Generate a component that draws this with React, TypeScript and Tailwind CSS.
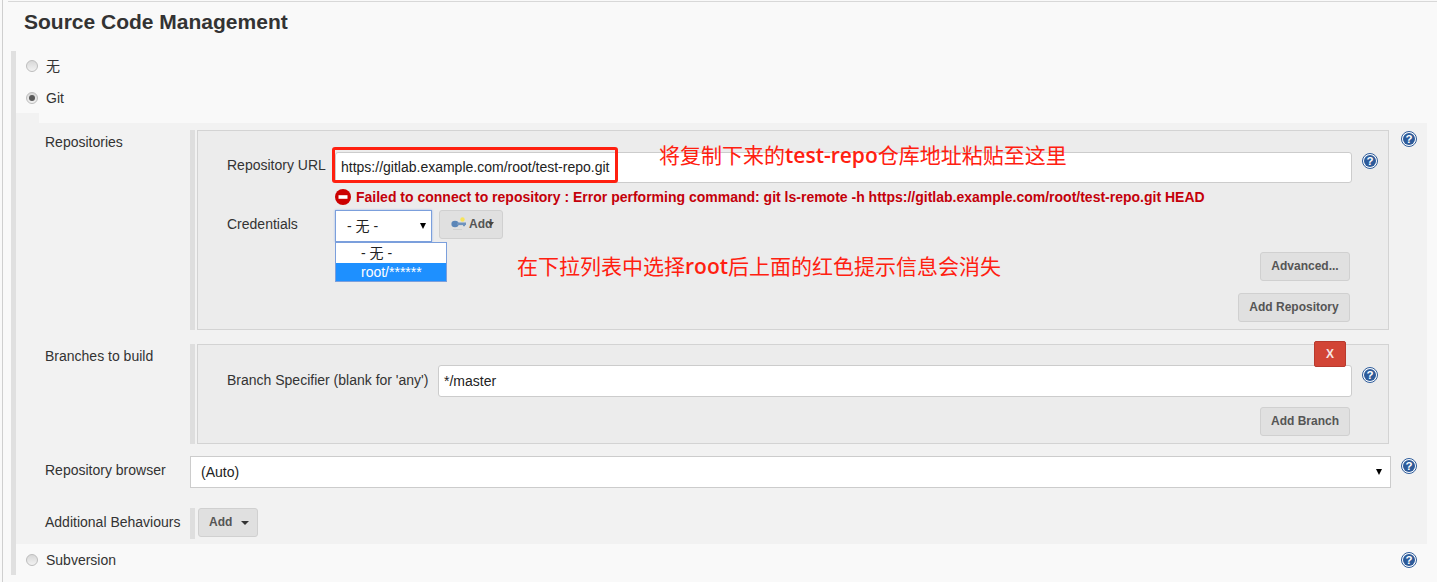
const sans = "font-['Liberation_Sans','Noto_Sans_CJK_SC',sans-serif]";

function HelpIcon() {
  return (
    <svg width="16" height="16" viewBox="0 0 16 16" className="shrink-0">
      <circle cx="8" cy="8" r="7.5" fill="#fff" stroke="#2d5b9a" strokeWidth="1" />
      <circle cx="8" cy="8" r="6" fill="#2d5b9a" />
      <text x="8" y="12" textAnchor="middle" fontSize="11.5" fontWeight="700" fill="#fff" fontFamily="Liberation Sans">
        ?
      </text>
    </svg>
  );
}

function Radio({ checked }: { checked?: boolean }) {
  return (
    <span className="-mt-px flex h-3 w-3 shrink-0 items-center justify-center rounded-full border border-[#bdbdbd] bg-gradient-to-b from-[#d8d8d8] to-[#f2f2f2]">
      {checked && <span className="h-1.5 w-1.5 rounded-full bg-[#5a5a5a]" />}
    </span>
  );
}

function GrayButton({ children, className }: { children: React.ReactNode; className: string }) {
  return (
    <button className={`flex h-[29px] items-center justify-center rounded-[3px] border border-[#d0d0d0] bg-[#e0e0e0] pb-[2px] text-[12px] font-bold text-[#555] ${className}`}>
      {children}
    </button>
  );
}

function KeyIcon() {
  return (
    <svg width="16" height="15" viewBox="0 0 16 15" className="shrink-0">
      <circle cx="11.5" cy="3.5" r="2.2" fill="#f6e35a" />
      <ellipse cx="4" cy="8" rx="3.6" ry="3.2" fill="#5b86b8" />
      <rect x="6" y="6.5" width="9" height="2.6" fill="#6f93bd" />
      <rect x="12" y="9" width="2" height="1.2" fill="#6f93bd" />
      <rect x="2" y="13" width="9" height="1" fill="#d0d0d0" />
    </svg>
  );
}

export default function App() {
  return (
    <div className={`relative h-[582px] w-[1437px] overflow-hidden bg-[#f9f9f9] text-[14px] text-[#333] ${sans}`}>
      <div className="absolute bottom-0 left-[2px] top-0 w-px bg-[#cfcfcf]" />
      <div className="ml-[8px] mt-px h-px bg-[#d8d8d8]" />

      <h2 className="ml-[24px] mt-[9px] h-[40px] text-[21px] font-bold leading-[22px] text-[#333]">
        Source Code Management
      </h2>

      <div className="ml-[11px] mr-[10px] border-l-[5px] border-[#e0e0e0]">
        <div className="flex h-[31px] items-center gap-[8px] pl-[10px]">
          <Radio />
          <span>无</span>
        </div>
        <div className="flex h-[31px] items-center gap-[8px] pl-[10px] pt-[1px]">
          <Radio checked />
          <span>Git</span>
        </div>
        <div className="h-[10px] w-[23px] bg-[#f2f2f2]" />

        <div className="h-[421px] bg-[#f2f2f2] pl-[29px] pt-[7px]">
          <div className="flex h-[200px]">
            <div className="w-[145px] pt-[2px]">Repositories</div>
            <div className="flex w-[1199px] border-l-[5px] border-[#dedede] pl-[2px]">
              <div className="relative h-full w-[1192px] border border-[#d3d3d3] bg-[#ececec] pl-[29px] pt-[21px]">
                <div className="flex h-[31px] items-start">
                  <span className="w-[108px] pt-[3px]">Repository URL</span>
                  <div className="flex h-[31px] w-[1017px] items-center rounded-[3px] border border-[#ccc] bg-white pl-[5px] text-[#222]">
                    https://gitlab.example.com/root/test-repo.git
                  </div>
                  <span className="ml-[10px] mt-[1px]">
                    <HelpIcon />
                  </span>
                </div>
                <div className="ml-[108px] mt-[6px] flex h-[16px] items-center gap-[5px] font-bold text-[#c4000a]">
                  <svg width="16" height="16" viewBox="0 0 16 16" className="shrink-0">
                    <circle cx="8" cy="8" r="8" fill="#cc0000" />
                    <rect x="3.5" y="6.2" width="9" height="3.6" fill="#fff" />
                  </svg>
                  <span>Failed to connect to repository : Error performing command: git ls-remote -h https://gitlab.example.com/root/test-repo.git HEAD</span>
                </div>
                <div className="relative mt-[5px] flex h-[32px] items-start">
                  <span className="w-[108px] pt-[4px]">Credentials</span>
                  <div className="flex h-[32px] w-[97px] items-center justify-between border border-[#7b9fdc] bg-white pl-[11px] pr-[5px] text-[#222] shadow-[0_0_2px_#9ab8ea]">
                    <span>- 无 -</span>
                    <span className="h-0 w-0 border-x-[3px] border-t-[6px] border-x-transparent border-t-black" />
                  </div>
                  <button className="ml-[7px] flex h-[29px] w-[64px] items-center rounded-[3px] border border-[#d0d0d0] bg-[#e0e0e0] pb-[2px] pl-[11px] text-[12px] font-bold text-[#555]">
                    <KeyIcon />
                    <span className="ml-[2px]">Add</span>
                    <span className="-ml-[4px] h-0 w-0 border-x-[3px] border-t-[4px] border-x-transparent border-t-[#444]" />
                  </button>
                  <div className="absolute left-[108px] top-[32px] w-[112px] border border-[#7b9fdc] bg-white leading-[18px] text-[#222]">
                    <div className="h-[20px] pl-[25px] pt-px">- 无 -</div>
                    <div className="h-[18px] bg-[#1e90ff] pl-[25px] text-white">root/******</div>
                  </div>
                </div>
                <div className="mr-[38px] mt-[10px] flex flex-col items-end gap-[12px]">
                  <GrayButton className="w-[90px]">Advanced...</GrayButton>
                  <GrayButton className="w-[112px]">Add Repository</GrayButton>
                </div>
              </div>
            </div>
            <span className="ml-[12px] mt-px">
              <HelpIcon />
            </span>
          </div>

          <div className="mt-[14px] flex h-[100px]">
            <div className="w-[145px] pt-[2px]">Branches to build</div>
            <div className="flex w-[1199px] border-l-[5px] border-[#dedede] pl-[2px]">
              <div className="relative h-full w-[1192px] border border-[#d3d3d3] bg-[#ececec] pl-[29px] pt-[20px]">
                <button className="absolute right-[42px] top-[-4px] z-10 flex h-[26px] w-[32px] items-center justify-center rounded-[2px] border border-[#b83a2e] bg-[#d24536] text-[12px] font-bold text-[#f6e6e4]">
                  X
                </button>
                <div className="flex h-[32px] items-start">
                  <span className="w-[211px] pt-[5px]">Branch Specifier (blank for 'any')</span>
                  <div className="flex h-[32px] w-[914px] items-center rounded-[3px] border border-[#ccc] bg-white pl-[5px] text-[#222]">
                    */master
                  </div>
                  <span className="ml-[10px] mt-[2px]">
                    <HelpIcon />
                  </span>
                </div>
                <div className="mr-[38px] mt-[10px] flex justify-end">
                  <GrayButton className="w-[90px]">Add Branch</GrayButton>
                </div>
              </div>
            </div>
          </div>

          <div className="mt-[12px] flex h-[32px]">
            <div className="w-[145px] pt-[4px]">Repository browser</div>
            <div className="flex h-[32px] w-[1201px] items-center justify-between border border-[#ccc] bg-white pl-[10px] pr-[8px] text-[#222]">
              <span>(Auto)</span>
              <span className="h-0 w-0 border-x-[3px] border-t-[6px] border-x-transparent border-t-black" />
            </div>
            <span className="ml-[10px] mt-[2px]">
              <HelpIcon />
            </span>
          </div>

          <div className="mt-[20px] flex h-[31px]">
            <div className="w-[145px] pt-[4px]">Additional Behaviours</div>
            <div className="border-l-[5px] border-[#dedede] pl-[3px]">
              <button className="flex h-[29px] w-[60px] items-center rounded-[3px] border border-[#d0d0d0] bg-[#e0e0e0] pb-[2px] pl-[10px] text-[12px] font-bold text-[#555]">
                Add
                <span className="ml-[9px] mt-[2px] h-0 w-0 border-x-[4px] border-t-[4px] border-x-transparent border-t-[#333]" />
              </button>
            </div>
          </div>
        </div>

        <div className="relative flex h-[31px] items-center gap-[8px] pl-[10px] pt-[1px]">
          <Radio />
          <span>Subversion</span>
          <span className="absolute left-[1385px] top-[8px]">
            <HelpIcon />
          </span>
        </div>
      </div>

      {/* red annotations pasted over the screenshot */}
      <div className="absolute left-[332px] top-[147px] h-[36px] w-[286px] rounded-[3px] border-[3px] border-[#ff2010]" />
      <div className="absolute left-[659px] top-[141px] text-[21px] leading-[28px] text-[#ff2010]">
        将复制下来的<span className="font-['Open_Sans'] font-semibold">test-repo</span>仓库地址粘贴至这里
      </div>
      <div className="absolute left-[517px] top-[252px] text-[21px] leading-[28px] text-[#ff2010]">
        在下拉列表中选择<span className="font-['Open_Sans'] font-semibold">root</span>后上面的红色提示信息会消失
      </div>
    </div>
  );
}
